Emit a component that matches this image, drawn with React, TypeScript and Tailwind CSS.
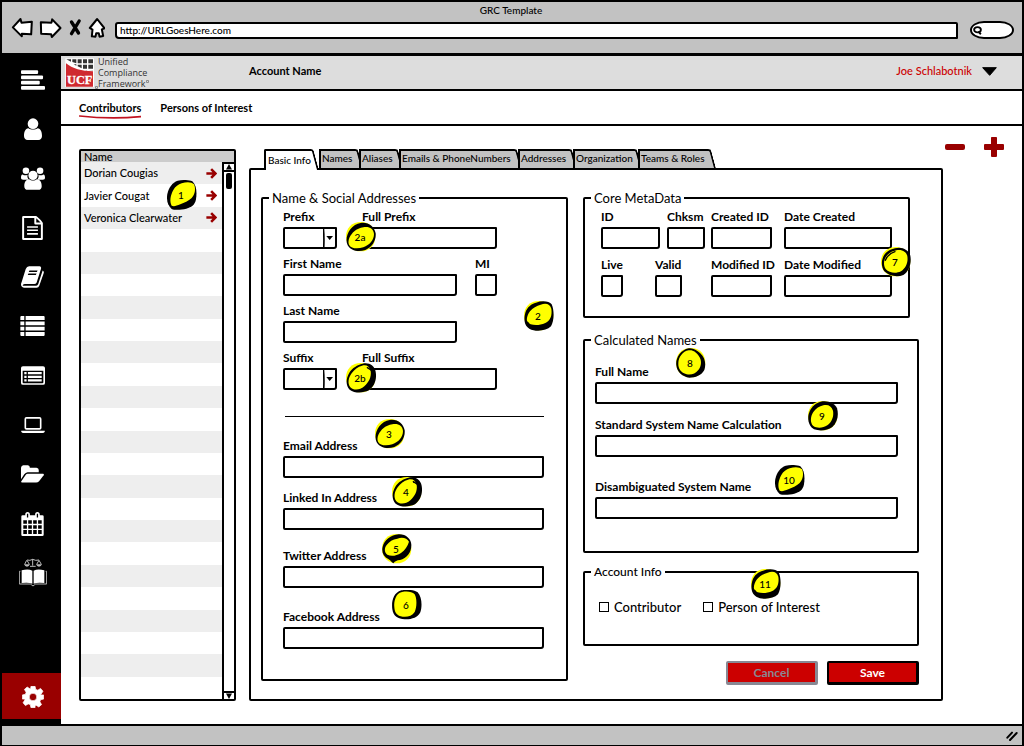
import type { ReactNode } from "react";

const BOX = "h-[22px] border-2 border-black bg-white rounded-[2px_1px_3px_2px] px-1 text-xs outline-none";

/* ---------- callout markers ---------- */

type Shape = { base?: string; ink: string; face: string; marks?: string };

const DISC = "M45 0C70 0 88 18 88 44C88 70 70 88 44 88C18 88 0 70 0 44C0 18 18 0 45 0Z";

const shapes: Record<string, Shape> = {
  slab: {
    ink: "M32 2C48 -1 66 -1 76 4C89 16 90 38 87 58C84 74 74 82 58 86C42 90 24 91 14 87C1 76 -2 58 1 42C5 22 16 8 32 2Z",
    face: "M44 10C60 5 74 6 81 13C87 26 84 44 74 54C64 64 52 67 40 73C28 78 20 80 14 77C7 65 10 46 19 30C25 20 34 13 44 10Z",
  },
  tilt: {
    base: DISC,
    ink: "M44 3C66 -1 86 14 89 34C91 56 78 76 58 84C38 91 14 87 5 70C-2 56 2 36 13 22C21 11 32 5 44 3Z",
    face: "M52 16C68 12 83 20 84 36C84 54 71 69 52 76C34 81 15 80 9 68C4 55 13 38 25 28C32 21 42 18 52 16Z",
  },
  lean: {
    base: DISC,
    ink: "M50 2C68 -3 86 8 89 26C93 48 86 70 69 82C50 91 26 91 11 80C-2 66 0 46 10 29C19 15 34 5 50 2Z",
    face: "M48 8C61 4 71 10 74 24C77 42 68 58 55 70C41 82 23 83 13 73C4 62 7 44 17 31C25 20 36 11 48 8Z",
    marks: "M64 14L77 22",
  },
  bowl: {
    base: DISC,
    ink: "M36 5C54 -2 76 0 83 10C91 28 91 58 81 76C66 91 34 93 16 83C-1 74 -1 50 5 32C11 17 22 9 36 5Z",
    face: "M50 11C66 5 78 9 82 23C85 44 79 58 64 66C47 74 31 73 20 70C15 68 15 64 11 62C6 60 9 42 18 31C26 21 38 14 50 11Z",
  },
  drip: {
    base: DISC,
    ink: "M50 1C72 0 89 16 88 34C88 56 74 74 54 78C44 79 40 81 34 88C30 86 26 80 20 76C4 68 -2 54 2 38C7 18 26 3 50 1Z",
    face: "M46 14C62 8 75 13 81 23C77 36 69 49 57 57C43 66 27 68 16 62C7 55 6 43 14 33C22 22 32 16 46 14Z",
  },
  block: {
    ink: "M28 1C44 -2 66 -1 77 7C90 20 91 50 85 67C77 83 58 89 38 88C18 87 4 79 1 58C-2 36 3 9 28 1Z",
    face: "M30 6C46 3 60 5 68 13C75 24 75 53 68 66C60 78 46 82 32 80C15 78 8 69 7 52C5 34 11 10 30 6Z",
  },
  shine: {
    base: DISC,
    ink: "M42 4C62 -2 83 8 88 26C92 48 85 72 67 84C48 92 24 87 10 73C-2 56 1 32 15 17C24 10 32 6 42 4Z",
    face: "M46 10C62 6 77 14 79 28C82 46 75 63 60 73C44 81 25 78 14 66C5 52 9 34 19 24C27 16 36 12 46 10Z",
    marks: "M13 40C18 28 28 18 42 14",
  },
  round: {
    base: DISC,
    ink: "M38 1C52 -1 62 7 72 15C87 28 91 48 85 66C77 82 58 89 40 89C20 87 3 73 1 52C-2 32 13 6 38 1Z",
    face: "M38 7C52 5 60 13 68 23C78 36 77 53 67 66C58 77 46 82 32 79C15 75 6 62 7 46C7 28 20 10 38 7Z",
  },
  hood: {
    base: DISC,
    ink: "M38 2C58 -3 81 6 87 22C93 42 88 64 73 78C58 89 36 91 18 85C3 76 -2 58 2 39C7 21 20 7 38 2Z",
    face: "M46 13C59 9 71 15 75 29C78 46 72 62 58 73C45 81 27 83 15 74C6 65 7 46 16 33C24 22 34 16 46 13Z",
  },
};

function Callout({ label, shape, place }: { label: string; shape: Shape; place: string }) {
  return (
    <span className={`absolute z-10 flex size-[30px] items-center justify-center pr-0.5 text-[10px] leading-none font-medium ${place}`}>
      <svg viewBox="0 0 90 90" className="absolute inset-0 size-full" aria-hidden="true">
        {shape.base && <path d={shape.base} fill="#ffff00" />}
        <path d={shape.ink} fill="#000" />
        <path d={shape.face} fill="#ffff00" />
        {shape.marks && <path d={shape.marks} fill="none" stroke="#000" strokeWidth="4" strokeLinecap="round" />}
      </svg>
      <span className="relative">{label}</span>
    </span>
  );
}

/* ---------- sidebar ---------- */

const navIcons: { name: string; size: string; box: string; art: ReactNode }[] = [
  {
    name: "Menu", size: "w-6 h-5", box: "0 0 73 59",
    art: <><rect width="52" height="11" rx="3" /><rect y="16" width="67" height="11" rx="3" /><rect y="32" width="57" height="11" rx="3" /><rect y="48" width="73" height="11" rx="3" /></>,
  },
  {
    name: "Person", size: "w-[18px] h-[22px]", box: "0 0 54 66",
    art: <><circle cx="27" cy="17" r="16" /><path d="M13 31C19 36 35 36 41 31C50 32 54 42 54 54C54 61 50 66 43 66H11C4 66 0 61 0 54C0 42 4 32 13 31Z" /></>,
  },
  {
    name: "People", size: "w-6 h-[23px]", box: "0 0 73 69",
    art: <><circle cx="15" cy="11" r="10" /><circle cx="58" cy="11" r="10" /><path d="M5 22C10 26 16 25 20 23C18 30 21 35 24 38H7C2 38 0 36 0 32C0 27 1 22 5 22ZM68 22C63 26 57 25 53 23C55 30 52 35 49 38H66C71 38 73 36 73 32C73 27 72 22 68 22Z" /><circle cx="36.500" cy="25" r="14" /><path d="M25 37C31 42 42 42 48 37C58 37 63 46 63 58C63 65 59 69 52 69H21C14 69 10 65 10 58C10 46 15 37 25 37Z" /></>,
  },
  {
    name: "Document", size: "w-[21px] h-6", box: "0 0 63 73",
    art: <><path fillRule="evenodd" d="M4 0H42C46 1 61 16 63 21V69Q63 73 59 73H4Q0 73 0 69V4Q0 0 4 0ZM6 6V67H57V26H41Q37 26 37 22V6ZM43 7V20H56Z" /><path d="M15 31H48V36H15ZM15 41H48V46H15ZM15 52H48V57H15Z" /></>,
  },
  {
    name: "Book", size: "w-[23px] h-[22px]", box: "0 0 68 64",
    art: <path fillRule="evenodd" d="M24 0H55Q61 1 59 8L46 49Q44 53 39 53H11Q5 54 5 58H45Q49 58 51 53L64 13Q69 16 67 21L54 58Q52 64 46 64H10Q1 63 0 55Q0 51 2 47L14 8Q17 0 24 0ZM25 13L23 17H47L49 13ZM22 22L20 26H44L46 22Z" />,
  },
  {
    name: "List", size: "w-[25px] h-5", box: "0 0 74 61",
    art: <path d="M2 0H12V12H0V2ZM16 0H72L74 2V12H16ZM0 17H12V28H0ZM16 17H74V28H16ZM0 33H12V44H0ZM16 33H74V44H16ZM0 49H12V61H2L0 59ZM16 49H74V59L72 61H16Z" />,
  },
  {
    name: "Records", size: "w-6 h-[19px]", box: "0 0 73 57",
    art: <><path fillRule="evenodd" d="M6 0H67Q73 0 73 6V51Q73 57 67 57H6Q0 57 0 51V6Q0 0 6 0ZM5 14V49Q5 52 8 52H65Q68 52 68 49V14Z" /><path d="M10 18H17V25H10ZM21 18H63V25H21ZM10 29H17V36H10ZM21 29H63V36H21ZM10 40H17V47H10ZM21 40H63V47H21Z" /></>,
  },
  {
    name: "Laptop", size: "w-6 h-4", box: "0 0 72 49",
    art: <path fillRule="evenodd" d="M16 0H56Q62 0 62 6V34Q62 39 56 39H16Q10 39 10 34V6Q10 0 16 0ZM15 5V34H57V5ZM0 42H72V45Q70 49 65 49H7Q2 49 0 45Z" />,
  },
  {
    name: "Folder", size: "w-[23px] h-[18px]", box: "0 0 70 54",
    art: <><path d="M7 0H21Q27 1 27 8H47Q54 9 54 15V22H20Q14 23 10 28L0 43V8Q1 0 7 0Z" /><path d="M20 26H67Q71 27 69 31L55 49Q51 53 46 53H3Q-1 52 1 49L14 30Q17 26 20 26Z" /></>,
  },
  {
    name: "Calendar", size: "w-[23px] h-6", box: "0 0 68 73",
    art: <path fillRule="evenodd" d="M4 10H12V5Q13 0 19 0Q25 0 26 5V10H42V5Q43 0 49 0Q55 0 56 5V10H64Q68 10 68 14V69Q68 73 64 73H4Q0 73 0 69V14Q0 10 4 10ZM17 5V17H21V5ZM47 5V17H51V5ZM6 25V36H17V25ZM21 25V36H32V25ZM36 25V36H47V25ZM51 25V36H62V25ZM6 40V51H17V40ZM21 40V51H32V40ZM36 40V51H47V40ZM51 40V51H62V40ZM6 55V67H17V55ZM21 55V67H32V55ZM36 55V67H47V55ZM51 55V67H62V55Z" />,
  },
  {
    name: "Law library", size: "w-7 h-[29px]", box: "0 0 84 87",
    art: <><path d="M8 37Q28 31 40 38V77Q28 72 8 75ZM44 38Q56 31 76 37V75Q56 72 44 77Z" /><path d="M4 40H1V78H34Q37 80 42 84Q47 80 50 78H83V40H80" fill="none" stroke="#bbb" strokeWidth="3" /><path d="M41 3V23M33 25H50M24 6Q33 9 41 4Q50 9 60 6M23 7L17 19M24 7L31 19M60 7L53 19M60 7L67 19" fill="none" stroke="#bbb" strokeWidth="3" /><path d="M15 19H33Q30 26 24 26Q18 26 15 19ZM51 19H69Q66 26 60 26Q54 26 51 19Z" fill="#bbb" /></>,
  },
];

function Sidebar() {
  return (
    <nav className="flex w-[59px] shrink-0 flex-col bg-black pb-[5px]" aria-label="Main">
      <ul className="flex flex-1 flex-col items-center justify-between pt-3 pb-[88px] pl-0.5">
        {navIcons.map((icon) => (
          <li key={icon.name} className="h-6">
            <a href="#" aria-label={icon.name} className="flex h-6 w-8 items-center justify-center">
              <svg viewBox={icon.box} className={`shrink-0 fill-white ${icon.size}`} aria-hidden="true">{icon.art}</svg>
            </a>
          </li>
        ))}
      </ul>
      <a href="#" aria-label="Settings" className="flex h-[46px] items-center justify-center bg-[#990000] pt-0.5 pl-0.5">
        <svg viewBox="0 0 64 64" className="size-[22px] fill-white" aria-hidden="true">
          <path fillRule="evenodd" d="M26 1H38L40 10L46 12L54 7L61 15L56 23L54 26H63V38L54 40L52 46L57 54L49 61L41 56L38 57V63H26L24 54L18 52L10 57L3 49L8 41L9 38H1V26L10 24L12 18L7 10L15 3L23 8L25 9ZM32 21A11 11 0 1 0 32 43A11 11 0 1 0 32 21Z" stroke="#fff" strokeWidth="2" strokeLinejoin="round" />
        </svg>
      </a>
    </nav>
  );
}

/* ---------- browser frame ---------- */

function BrowserBar() {
  return (
    <header className="border-b-[3px] border-black pt-0.5 pr-2 pb-3.5 pl-1.5">
      <p className="text-center text-[10px] leading-3 font-medium">GRC Template</p>
      <div className="mt-px flex items-center">
        <svg viewBox="0 0 290 66" className="h-[22px] w-[97px] shrink-0" role="img" aria-label="Back, forward, stop, home">
          <g fill="#fff" stroke="#000" strokeWidth="6" strokeLinejoin="round">
            <path d="M14 31L37 6L40 17L71 14L69 52L41 50L41 58Z" />
            <path d="M157 33L132 7L130 17L98 16L99 50L129 52L131 60Z" />
            <path d="M267 6L245 33L253 38L251 58L262 59L264 49L272 49L274 59L285 57L281 37L289 34Z" />
          </g>
          <path d="M190 15L211 48M213 12L190 50" stroke="#000" strokeWidth="10" strokeLinecap="round" />
        </svg>
        <input aria-label="Address" defaultValue="http://URLGoesHere.com" className="mt-1 ml-2.5 h-[17px] min-w-0 flex-1 rounded-[3px_2px_1px_4px] border-2 border-black bg-white px-[3px] text-[10px] leading-3 font-medium outline-none" />
        <label className="mt-1 ml-3 flex h-[18px] w-11 items-center overflow-hidden rounded-[14px/9px] border-2 border-black bg-white pl-px">
          <svg viewBox="0 0 24 24" className="size-[9px] shrink-0" fill="none" stroke="#000" strokeWidth="5" aria-hidden="true">
            <ellipse cx="12" cy="10" rx="9" ry="7" /><path d="M14 15L21 22" />
          </svg>
          <input type="search" aria-label="Search" className="w-full min-w-0 bg-transparent text-[10px] outline-none" />
        </label>
      </div>
    </header>
  );
}

function Logo() {
  return (
    <a href="#" className="flex items-center font-['Open_Sans',sans-serif] text-[#333]">
      <svg viewBox="0 0 90 90" className="size-[30px]" aria-hidden="true">
        <rect x="1" y="1" width="86" height="86" fill="#fff" />
        <path d="M4 4H18V11ZM22 4H34V16L22 12ZM38 4H50V16H38ZM54 4H66V16H54ZM70 4H84V16H70ZM26 19H34V23ZM38 20H50V31L38 25ZM54 20H66V32H54ZM70 20H84V32H70ZM60 36H66V37ZM70 36H84V37Z" fill="#333" />
        <path d="M3 16C22 32 50 40 84 40V86H3Z" fill="#cf2a30" />
        <text x="44" y="79" textAnchor="middle" fontFamily="Liberation Serif, serif" fontWeight="700" fontSize="37" fill="#fff" stroke="#fff" strokeWidth="1">UCF</text>
      </svg>
      <svg viewBox="0 0 10 10" className="size-[3px] self-end" aria-hidden="true"><circle cx="5" cy="5" r="4" fill="none" stroke="#333" strokeWidth="2" /></svg>
      <span className="text-[9px] leading-[11px]">
        <span className="block">Unified</span>
        <span className="block">Compliance</span>
        <span className="flex">
          Framework
          <svg viewBox="0 0 10 10" className="mt-0.5 size-[3px]" aria-hidden="true"><circle cx="5" cy="5" r="4" fill="none" stroke="#333" strokeWidth="2" /></svg>
        </span>
      </span>
    </a>
  );
}

function AccountBar() {
  return (
    <div className="flex h-[35px] items-center border-b-2 border-black bg-[#dddddd] pr-[25px] pl-1">
      <div className="w-[184px]"><Logo /></div>
      <p className="pb-[3px] text-[11px] leading-4 font-bold">Account Name</p>
      <button type="button" className="ml-auto flex items-center gap-2.5 pb-[3px] text-[11px] leading-4 font-medium text-[#cc0000]">
        Joe Schlabotnik
        <svg viewBox="0 0 45 27" className="h-[9px] w-[15px]" aria-hidden="true"><path d="M2 2H43L23 25Z" stroke="#000" strokeWidth="3" strokeLinejoin="round" /></svg>
      </button>
    </div>
  );
}

function SectionNav() {
  return (
    <nav className="flex h-[35px] items-center gap-[19px] border-b-2 border-black pt-0.5 pl-[18px] text-[11px] font-bold" aria-label="Sections">
      <a href="#" aria-current="page" className="relative">
        Contributors
        <svg viewBox="0 0 180 12" preserveAspectRatio="none" className="absolute top-full left-0 -mt-0.5 h-1 w-full" aria-hidden="true">
          <path d="M2 3Q90 13 178 5" fill="none" stroke="#c1121f" strokeWidth="5" strokeLinecap="round" />
        </svg>
      </a>
      <a href="#">Persons of Interest</a>
    </nav>
  );
}

/* ---------- contributor list ---------- */

const people = ["Dorian Cougias", "Javier Cougat", "Veronica Clearwater"];
const rows = Array.from({ length: 24 }, (_, i) => people[i] ?? "");

function PeopleList() {
  return (
    <section className="relative flex w-[157px] shrink-0 flex-col rounded-xs border-2 border-black">
      <h2 className="h-[11px] bg-[#cccccc] pl-[3px] text-[11px] leading-[11px] font-medium">Name</h2>
      <div className="flex flex-1">
        <ul className="flex min-w-0 flex-1 flex-col">
          {rows.map((name, i) => (
            <li key={i} className="flex flex-1 items-center justify-between pr-[5px] pl-[3px] text-[11px] leading-3 font-medium odd:bg-[#eeeeee]">
              {name}
              {name && (
                <button type="button" aria-label={`Open ${name}`}>
                  <svg viewBox="0 0 30 30" className="size-[11px]" fill="none" stroke="#990000" strokeWidth="7" aria-hidden="true"><path d="M1 15H26M14 3L26 15L14 27" /></svg>
                </button>
              )}
            </li>
          ))}
        </ul>
        <div className="flex w-3 flex-col items-center justify-between border-t-2 border-l-2 border-black bg-white" aria-hidden="true">
          <div className="w-full">
            <svg viewBox="0 0 30 24" className="h-[8px] w-full border-b-2 border-black"><path d="M15 0L27 22H3Z" /></svg>
            <div className="mx-auto mt-px h-4 w-1.5 rounded-xs bg-black" />
          </div>
          <svg viewBox="0 0 30 24" className="h-[8px] w-full border-t-2 border-black"><path d="M15 24L27 2H3Z" /></svg>
        </div>
      </div>
      <Callout label="1" shape={shapes.slab} place="left-[86px] top-[29px]" />
    </section>
  );
}

/* ---------- tabs ---------- */

const tabs = [
  { name: "Names", width: "min-w-[40px]" },
  { name: "Aliases", width: "min-w-[40px]" },
  { name: "Emails & PhoneNumbers", width: "min-w-[119px]" },
  { name: "Addresses", width: "min-w-[55px]" },
  { name: "Organization", width: "min-w-[65px]" },
  { name: "Teams & Roles", width: "min-w-[74px]" },
];

function Tabs() {
  return (
    <div role="tablist" className="flex h-[19px] pl-[15px] text-[10px] leading-none font-medium whitespace-nowrap">
      <button type="button" role="tab" aria-selected="true" className="relative z-10 -mb-[2px] h-[21px] min-w-[55px] pr-[5px] pl-1 text-left">
        <span className="absolute inset-y-0 right-0 left-2 origin-bottom skew-x-[15deg] rounded-tr-[3px] border-t-2 border-r-2 border-black bg-white" />
        <span className="absolute inset-y-0 right-3 left-0 rounded-tl-xs border-t-2 border-l-2 border-black bg-white" />
        <span className="relative">Basic Info</span>
      </button>
      {tabs.map((tab) => (
        <button key={tab.name} type="button" role="tab" aria-selected="false" className={`relative pr-1 pb-0.5 pl-[3px] text-left ${tab.width}`}>
          <span className="absolute inset-y-0 -right-1 left-2 origin-bottom skew-x-[15deg] rounded-tr-[3px] border-t-2 border-r-2 border-black bg-[#c2c2c2]" />
          <span className="absolute inset-y-0 right-3 left-0 border-t-2 border-l-2 border-black bg-[#c2c2c2]" />
          <span className="relative">{tab.name}</span>
        </button>
      ))}
    </div>
  );
}

/* ---------- form ---------- */

function Field({ id, label, width = "w-full", className = "" }: { id: string; label: string; width?: string; className?: string }) {
  return (
    <div className={`flex flex-col gap-0.5 ${width} ${className}`}>
      <label htmlFor={id} className="text-xs leading-4 font-bold whitespace-nowrap">{label}</label>
      <input id={id} className={`w-full ${BOX}`} />
    </div>
  );
}

function Picker({ id, label }: { id: string; label: string }) {
  return (
    <div className="flex w-[54px] flex-col gap-0.5">
      <label htmlFor={id} className="text-xs leading-4 font-bold">{label}</label>
      <div className="relative">
        <select id={id} className={`block w-full appearance-none ${BOX}`}><option></option></select>
        <svg viewBox="0 0 42 66" className="pointer-events-none absolute top-0 right-0 h-[22px] w-[14px]" aria-hidden="true">
          <path d="M1 2Q4 34 2 64" fill="none" stroke="#000" strokeWidth="5" /><path d="M10 27H30L20 39Z" />
        </svg>
      </div>
    </div>
  );
}

function Group({ title, children, callouts, className = "", legend = "text-[13px]" }: { title: string; children: ReactNode; callouts: ReactNode; className?: string; legend?: string }) {
  return (
    <div className={`relative ${className}`}>
      <fieldset className="h-full rounded-xs border-2 border-black">
        <legend className={`ml-1.5 px-[3px] leading-4 ${legend}`}>{title}</legend>
        {children}
      </fieldset>
      {callouts}
    </div>
  );
}

function ContributorForm() {
  return (
    <form className="grid flex-1 grid-cols-[307fr_336fr] gap-[15px] rounded-xs border-2 border-black pt-5 pr-[22px] pb-3.5 pl-2.5">
      <Group
        title="Name & Social Addresses"
        className="mb-1"
        callouts={
          <>
            <Callout label="2a" shape={shapes.tilt} place="left-[85px] top-8" />
            <Callout label="2b" shape={shapes.lean} place="left-[85px] top-[173px]" />
            <Callout label="2" shape={shapes.bowl} place="left-[263px] top-[111px]" />
            <Callout label="3" shape={shapes.tilt} place="left-[114px] top-[229px]" />
            <Callout label="4" shape={shapes.lean} place="left-[131px] top-[287px]" />
            <Callout label="5" shape={shapes.drip} place="left-[121px] top-[344px]" />
            <Callout label="6" shape={shapes.block} place="left-[131px] top-[400px]" />
          </>
        }
      >
        <div className="flex flex-col pt-[3px] pr-[22px] pl-5">
          <div className="flex flex-col gap-[7px]">
            <div className="flex gap-[25px]">
              <Picker id="prefix" label="Prefix" />
              <Field id="full-prefix" label="Full Prefix" width="w-[135px]" />
            </div>
            <div className="flex gap-[18px]">
              <Field id="first" label="First Name" width="w-[174px]" />
              <Field id="mi" label="MI" width="w-[22px]" />
            </div>
            <Field id="last" label="Last Name" width="w-[174px]" />
            <div className="flex gap-[25px]">
              <Picker id="suffix" label="Suffix" />
              <Field id="full-suffix" label="Full Suffix" width="w-[135px]" />
            </div>
          </div>
          <hr className="mt-[26px] ml-0.5 border-t border-black" />
          <Field id="email" label="Email Address" className="mt-[21px]" />
          <Field id="linkedin" label="Linked In Address" className="mt-3" />
          <Field id="twitter" label="Twitter Address" className="mt-[18px]" />
          <Field id="facebook" label="Facebook Address" className="mt-[21px]" />
        </div>
      </Group>

      <div className="flex flex-col">
        <Group title="Core MetaData" className="mr-[9px]" callouts={<Callout label="7" shape={shapes.shine} place="left-[298px] top-[57px]" />}>
          <div className="flex flex-col gap-2 pt-[3px] pb-[19px] pl-4">
            <div className="flex">
              <Field id="id" label="ID" width="w-[59px]" />
              <Field id="chksm" label="Chksm" width="w-[38px]" className="ml-[7px]" />
              <Field id="created-id" label="Created ID" width="w-[61px]" className="ml-1.5" />
              <Field id="date-created" label="Date Created" width="w-[108px]" className="ml-3" />
            </div>
            <div className="flex">
              <Field id="live" label="Live" width="w-[22px]" />
              <Field id="valid" label="Valid" width="w-[27px]" className="ml-8" />
              <Field id="modified-id" label="Modified ID" width="w-[61px]" className="ml-[29px]" />
              <Field id="date-modified" label="Date Modified" width="w-[108px]" className="ml-3" />
            </div>
          </div>
        </Group>

        <Group
          title="Calculated Names"
          className="mt-3.5"
          callouts={
            <>
              <Callout label="8" shape={shapes.round} place="left-[93px] top-4" />
              <Callout label="9" shape={shapes.hood} place="left-[225px] top-[69px]" />
              <Callout label="10" shape={shapes.slab} place="left-[192px] top-[133px]" />
            </>
          }
        >
          <div className="pt-4 pr-[19px] pb-8 pl-2.5">
            <Field id="full-name" label="Full Name" />
            <Field id="standard-name" label="Standard System Name Calculation" className="mt-[13px]" />
            <Field id="system-name" label="Disambiguated System Name" className="mt-[22px]" />
          </div>
        </Group>

        <Group title="Account Info" legend="text-xs font-medium" className="mt-[11px]" callouts={<Callout label="11" shape={shapes.bowl} place="left-[168px] top-[5px]" />}>
          <div className="flex gap-[22px] pt-[18px] pb-7 pl-3.5 text-[13px] leading-[18px] font-medium">
            <label className="flex items-center gap-[5px]">
              <input type="checkbox" className="size-[10px] appearance-none border border-black bg-white checked:bg-black" />
              Contributor
            </label>
            <label className="flex items-center gap-[5px]">
              <input type="checkbox" className="size-[10px] appearance-none border border-black bg-white checked:bg-black" />
              Person of Interest
            </label>
          </div>
        </Group>

        <div className="mt-[15px] flex justify-end gap-[9px] text-xs font-bold">
          <button type="button" className="h-6 w-[92px] rounded-xs border-t-2 border-r-[3px] border-b-[3px] border-l-2 border-[#888893] bg-[#cc0000] text-[#888893]">Cancel</button>
          <button type="submit" className="h-6 w-[92px] rounded-xs border-t-2 border-r-[3px] border-b-[3px] border-l-2 border-black bg-[#cc0000] text-white">Save</button>
        </div>
      </div>
    </form>
  );
}

export default function App() {
  return (
    <div className="flex min-h-screen flex-col border-2 border-black bg-[#c2c2c2] font-[Lato,sans-serif] text-black">
      <BrowserBar />
      <div className="flex flex-1">
        <Sidebar />
        <div className="flex min-w-0 flex-1 flex-col bg-white">
          <AccountBar />
          <SectionNav />
          <main className="flex flex-1 pt-[23px] pb-[23px] pl-[18px]">
            <PeopleList />
            <div className="ml-[13px] flex min-w-0 flex-1 flex-col">
              <Tabs />
              <ContributorForm />
            </div>
            <div className="-mt-3 flex h-5 w-[79px] shrink-0 gap-[19px] pl-0.5">
              <button type="button" aria-label="Remove" className="flex size-5 items-center justify-center">
                <span className="h-[6px] w-5 rounded-xs bg-[#990000]" />
              </button>
              <button type="button" aria-label="Add" className="flex size-5 items-center justify-center">
                <svg viewBox="0 0 60 60" className="size-5 fill-[#990000]" aria-hidden="true"><path d="M23 0H37Q39 0 39 3V21H57Q60 21 60 24V36Q60 39 57 39H39V57Q39 60 36 60H24Q21 60 21 57V39H3Q0 39 0 36V24Q0 21 3 21H21V3Q21 0 23 0Z" /></svg>
              </button>
            </div>
          </main>
        </div>
      </div>
      <footer className="flex h-[21px] items-center justify-end border-t-2 border-black pr-1">
        <svg viewBox="0 0 36 30" className="h-[10px] w-3" stroke="#000" strokeWidth="6" strokeLinecap="round" aria-hidden="true"><path d="M4 20L18 5M12 27L32 6" /></svg>
      </footer>
    </div>
  );
}
